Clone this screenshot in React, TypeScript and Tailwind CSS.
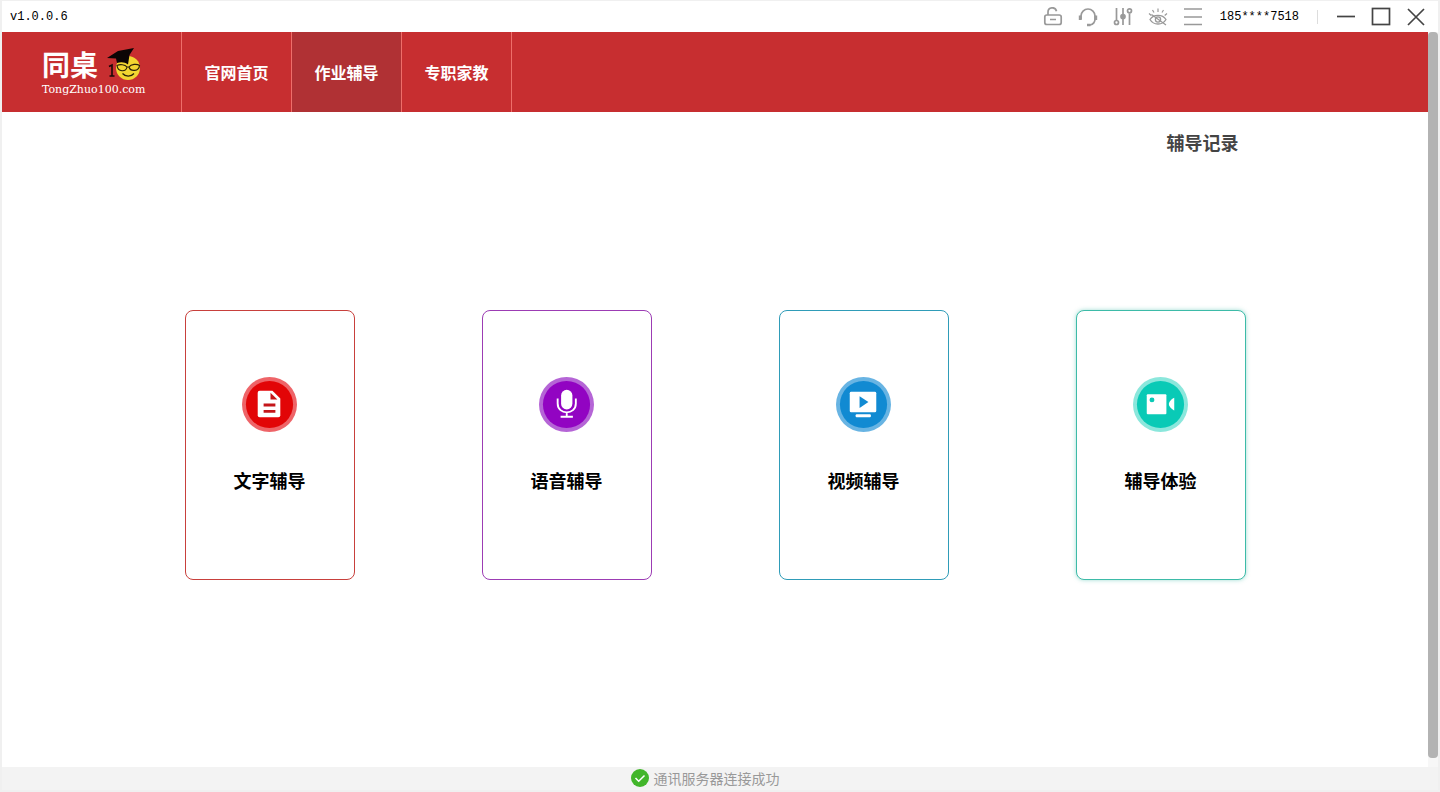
import type { ReactNode } from 'react';

interface TutorCardProps {
    title: string;
    borderClass: string;
    fill: string;
    ring: string;
    children: ReactNode;
}

function TutorCard({ title, borderClass, fill, ring, children }: TutorCardProps) {
    return (
        <button
            type="button"
            className={`flex h-[270px] w-[170px] flex-col items-center rounded-lg border bg-white pt-[66px] ${borderClass}`}
        >
            <svg className="size-[55px]" viewBox="0 0 56 56" aria-hidden="true">
                <circle cx="28" cy="28" r="28" fill={ring} />
                <circle cx="28" cy="28" r="24" fill={fill} />
                {children}
            </svg>
            <span className="mt-[34px] text-lg leading-7 font-bold text-black">{title}</span>
        </button>
    );
}

interface ToolButtonProps {
    label: string;
    className?: string;
    children: ReactNode;
}

function ToolButton({ label, className = 'text-[#999]', children }: ToolButtonProps) {
    return (
        <button type="button" aria-label={label} className={className}>
            <svg className="size-5" viewBox="0 0 20 20" fill="none" stroke="currentColor" strokeWidth="1.7">
                {children}
            </svg>
        </button>
    );
}

function TitleBar() {
    return (
        <div className="flex h-[31px] items-center bg-white pr-3 pl-2 font-['Liberation_Mono',monospace] text-xs text-black">
            <span>v1.0.0.6</span>
            <div className="ml-auto flex items-center gap-[15px]">
                <ToolButton label="锁定">
                    <rect x="1.8" y="8" width="16.4" height="9.500" rx="2" />
                    <path d="M5 8V5.200a4.300 4.300 0 0 1 8.500-1M7 12.500h6" />
                </ToolButton>
                <ToolButton label="客服">
                    <path d="M3 12V9a7 7 0 0 1 14 0v3c0 3-2 5.300-5 6" />
                    <path d="M2.300 8.500v4.500M17.700 8.500v4.500" strokeWidth="3" />
                    <path d="M9 18h3.500" strokeWidth="2.500" />
                </ToolButton>
                <ToolButton label="设置">
                    <path d="M3.500 1v12M10 1v6M10 12v6M16.500 6.500V18" />
                    <circle cx="3.500" cy="15.500" r="2" />
                    <circle cx="10" cy="9.500" r="2" fill="currentColor" />
                    <circle cx="16.500" cy="3.800" r="2" />
                </ToolButton>
                <ToolButton label="护眼模式">
                    <path d="M2 12.500c3.500-5.500 12.500-5.500 16 0-3.500 6-12.500 6-16 0Z" strokeWidth="1.300" />
                    <circle cx="10" cy="12.500" r="2.600" strokeWidth="1.300" />
                    <path d="M10 1.500v3.500M4.500 3 6 5.500M15.500 3 14 5.500M1 6.500l2.300 2M19 6.500l-2.300 2M3.500 7.500 18 18" strokeWidth="1.200" />
                </ToolButton>
                <ToolButton label="菜单">
                    <path d="M1 2h18M1 10h18M1 17.500h18" />
                </ToolButton>
            </div>
            <span className="ml-[17px]">185****7518</span>
            <span className="mx-[18px] h-3.5 w-px bg-[#ddd]" />
            <div className="flex items-center gap-[15px]">
                <ToolButton label="最小化" className="text-[#444]">
                    <path d="M1 9.500h18" />
                </ToolButton>
                <ToolButton label="最大化" className="text-[#444]">
                    <rect x="1.500" y="1.500" width="17" height="16" />
                </ToolButton>
                <ToolButton label="关闭" className="text-[#444]">
                    <path d="m2 2 16 16M18 2 2 18" />
                </ToolButton>
            </div>
        </div>
    );
}

function Logo() {
    return (
        <a href="#" className="flex w-[179px] flex-col justify-center pb-1 pl-10 text-white">
            <span className="flex items-center gap-2">
                <span className="text-[28px] leading-10 font-bold">同桌</span>
                <svg className="size-9" viewBox="0 0 36 36" aria-hidden="true">
                    <path d="M3 20.500 6 19v11M3.500 30h5" fill="none" stroke="#1a0808" strokeWidth="1.600" />
                    <circle cx="22" cy="22" r="12" fill="#f2d631" />
                    <path d="M1 12 12 5 28 2l-4.500 7L22 18.500c-3-2.500-7-3-11-1.500l-1-4.500Z" fill="#0c0505" />
                    <g fill="none" stroke="#2b2108" strokeWidth="1.200">
                        <path d="M11 19.500c3-1.500 8-1 10 1.500-1 5-9 5.500-10-1.500ZM23 21c2-3 8-3.500 10.500-1.500-.5 6-9 6.500-10.500 1.500ZM21 21h2" />
                        <path d="M16.500 27.500c3 3.500 8.500 3.500 11.500 0" />
                    </g>
                </svg>
            </span>
            <span className="font-['DejaVu_Serif',serif] text-[11px] leading-3">TongZhuo100.com</span>
        </a>
    );
}

const navItems = [
    { label: '官网首页', active: false },
    { label: '作业辅导', active: true },
    { label: '专职家教', active: false },
];

function Header() {
    return (
        <header className="flex h-20 bg-[#c72e30]">
            <Logo />
            <nav className="flex border-l border-[#ee6e6a]">
                {navItems.map((item) => (
                    <a
                        key={item.label}
                        href="#"
                        aria-current={item.active ? 'page' : undefined}
                        className={`flex w-[110px] items-center justify-center border-r border-[#ee6e6a] text-base font-bold text-white ${item.active ? 'bg-[#b03134]' : ''}`}
                    >
                        {item.label}
                    </a>
                ))}
            </nav>
        </header>
    );
}

export default function App() {
    return (
        <div className="flex min-h-screen flex-col border-x-2 border-t border-b-2 border-[#f0f0f0] bg-white font-['Noto_Sans_CJK_SC',sans-serif]">
            <TitleBar />

            <div className="flex flex-1">
                <div className="flex flex-1 flex-col">
                    <Header />
                    <main className="mx-auto flex w-full max-w-[1061px] flex-col pt-[18px] pb-16">
                        <a href="#" className="mr-[7px] self-end text-lg leading-6 font-bold text-[#444]">
                            辅导记录
                        </a>
                        <div className="mt-[156px] flex justify-between gap-4">
                            <TutorCard title="文字辅导" borderClass="border-[#c8403c]" fill="#e20507" ring="#ee6468">
                                <path d="M18 14h13l8 8v17a2 2 0 0 1-2 2H18a2 2 0 0 1-2-2V16a2 2 0 0 1 2-2Z" fill="#fff" />
                                <path d="M29 16v7h7Z" fill="#c4161a" />
                                <path d="M22 28.500h12M22 35h12" stroke="#c4161a" strokeWidth="3" />
                            </TutorCard>
                            <TutorCard title="语音辅导" borderClass="border-[#9c3cb4]" fill="#9204c2" ring="#b565d6">
                                <rect x="22.500" y="13" width="11.500" height="20" rx="5.750" fill="#fff" />
                                <path d="M19 22v5c0 12 18.500 12 18.500 0v-5M28.250 36v4M22 40.500h12.500" fill="none" stroke="#fff" strokeWidth="1.900" />
                            </TutorCard>
                            <TutorCard title="视频辅导" borderClass="border-[#2f9cb8]" fill="#118ad2" ring="#68b4e3">
                                <rect x="14" y="15" width="27" height="21" rx="1.500" fill="#fff" />
                                <path d="M24 19.500v12l9-6Z" fill="#118ad2" />
                                <rect x="20" y="38" width="15.500" height="3" rx="1" fill="#fff" />
                            </TutorCard>
                            <TutorCard
                                title="辅导体验"
                                borderClass="border-[#3dbba8] shadow-[0_0_4px_rgba(61,187,168,0.5)]"
                                fill="#09cab6"
                                ring="#8be7dc"
                            >
                                <rect x="14" y="17.500" width="20" height="20.500" rx="1" fill="#fff" />
                                <circle cx="19.300" cy="23.300" r="2.500" fill="#09cab6" />
                                <path d="M42 21v13c-2.500-1-5.500-4-5.500-6.500s3-5.500 5.500-6.500Z" fill="#fff" />
                            </TutorCard>
                        </div>
                    </main>
                </div>
                {/* Scrollbar */}
                <div className="flex w-2.5 bg-[#f7f7f7] pb-[9px]">
                    <div className="flex-1 rounded-[4px] bg-[#b3b3b3]" />
                </div>
            </div>

            <footer className="flex h-[23px] items-center justify-center gap-[5px] bg-[#f3f3f3] pr-[30px] pb-0.5 text-sm text-[#999]">
                <svg className="size-[18px]" viewBox="0 0 18 18" aria-hidden="true">
                    <circle cx="9" cy="9" r="9" fill="#42b62a" />
                    <path d="m4.500 9 3.200 3.200L13.500 6.500" fill="none" stroke="#fff" strokeWidth="1.500" />
                </svg>
                <span role="status">通讯服务器连接成功</span>
            </footer>
        </div>
    );
}
